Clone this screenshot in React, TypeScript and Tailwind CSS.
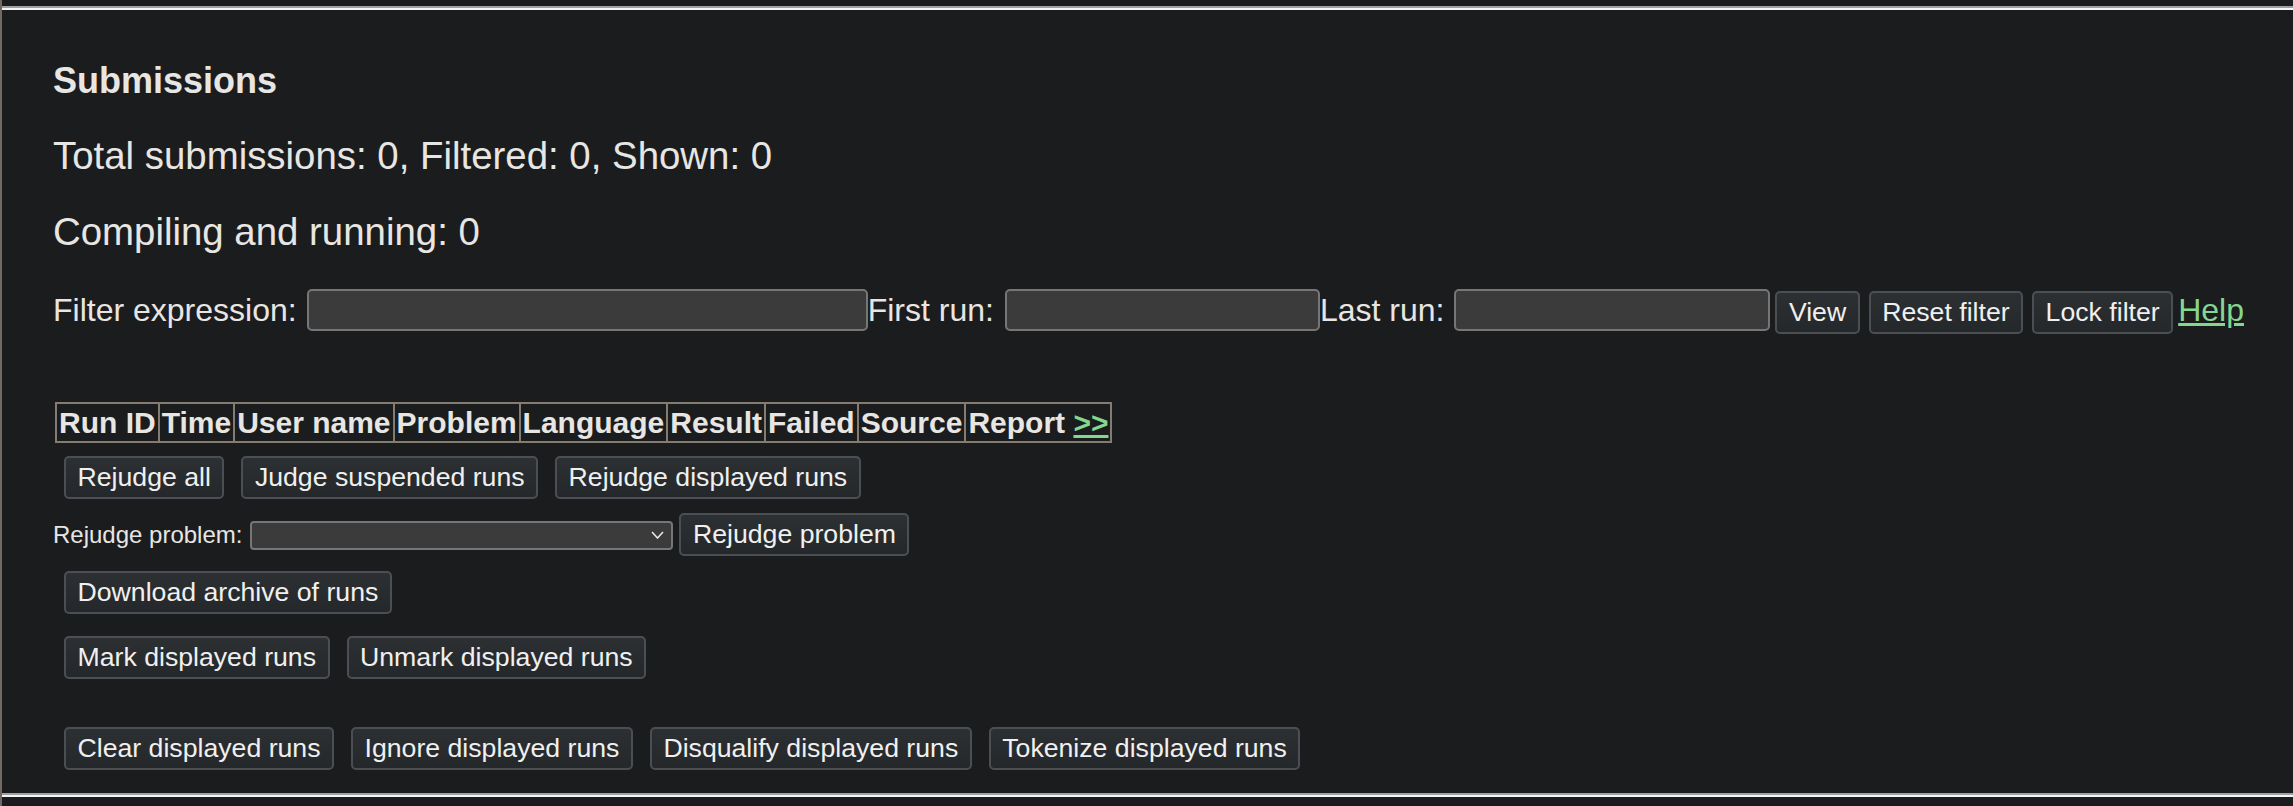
import React from "react";

const font = "font-['Liberation_Sans',Arial,sans-serif]";
const btn =
  "h-[43px] shrink-0 px-[11.5px] border-2 border-[#4b4f54] rounded-[5px] bg-linear-to-b from-[#2d3033] to-[#25282a] text-[#f0f0f0] text-[26.67px] leading-none whitespace-nowrap " +
  font;
const inputCls =
  "h-[42px] shrink-0 bg-[#3b3b3b] border-2 border-[#767676] rounded-[5px] outline-none";
const label = "mt-[3px] text-[32px] leading-[37px] whitespace-nowrap";
const th =
  "border-2 border-[#857c71] px-[2px] py-[2px] text-[30px] leading-[33px] font-bold whitespace-nowrap text-center";

function Btn({ children, className = "" }: { children: React.ReactNode; className?: string }) {
  return <button className={btn + " " + className}>{children}</button>;
}

export default function App() {
  return (
    <div
      className={
        "min-h-[806px] w-full bg-[#1b1c1e] border-l-2 border-[#6f6b64] pt-[6px] text-[#e8e6e3] overflow-hidden " +
        font
      }
    >
      <div className="h-[4px] border-t-2 border-t-[#a0a0a0] border-b-2 border-b-[#f5f5f5]" />
      <div className="pl-[51px]">
        <h2 className="mt-[50px] text-[36px] leading-[41px] font-bold">Submissions</h2>
        <p className="mt-[33px] text-[38.4px] leading-[44px]">
          Total submissions: 0, Filtered: 0, Shown: 0
        </p>
        <p className="mt-[32px] text-[38.4px] leading-[44px]">Compiling and running: 0</p>

        <div className="mt-[35px] flex items-start">
          <span className={label}>Filter expression:</span>
          <input className={inputCls + " ml-[10px] w-[561px]"} />
          <span className={label}>First run:</span>
          <input className={inputCls + " ml-[11px] w-[315px]"} />
          <span className={label}>Last run:</span>
          <input className={inputCls + " ml-[10px] w-[316px]"} />
          <Btn className="ml-[5px] mt-[2px]">View</Btn>
          <Btn className="ml-[9px] mt-[2px]">Reset filter</Btn>
          <Btn className="ml-[9px] mt-[2px]">Lock filter</Btn>
          <a href="#" className={label + " ml-[5px] text-[#85d68f] underline"}>
            Help
          </a>
        </div>

        <table className="mt-[68px] ml-[2px] border-collapse border-2 border-[#857c71]">
          <thead>
            <tr>
              <th className={th}>Run ID</th>
              <th className={th}>Time</th>
              <th className={th}>User name</th>
              <th className={th}>Problem</th>
              <th className={th}>Language</th>
              <th className={th}>Result</th>
              <th className={th}>Failed</th>
              <th className={th}>Source</th>
              <th className={th}>
                Report{" "}
                <a href="#" className="text-[#85d68f] underline">
                  &gt;&gt;
                </a>
              </th>
            </tr>
          </thead>
        </table>

        <div className="mt-[13px] ml-[11px] flex gap-[17px]">
          <Btn>Rejudge all</Btn>
          <Btn>Judge suspended runs</Btn>
          <Btn>Rejudge displayed runs</Btn>
        </div>

        <div className="mt-[14px] flex items-start">
          <span className="mt-[8px] text-[24px] leading-[28px] whitespace-nowrap">Rejudge problem:</span>
          <div className="relative ml-[8px] mt-[8px] w-[423px] h-[29px] shrink-0">
            <select className="w-full h-full appearance-none bg-[#3b3b3b] border-2 border-[#767676] rounded-[4px] outline-none" />
            <svg
              className="absolute right-[9px] top-[10px] pointer-events-none"
              width="13"
              height="8"
              viewBox="0 0 13 8"
              fill="none"
            >
              <path d="M1 1 L6.5 7 L12 1" stroke="#e8e6e3" strokeWidth="1.6" />
            </svg>
          </div>
          <Btn className="ml-[6px]">Rejudge problem</Btn>
        </div>

        <div className="mt-[15px] ml-[11px] flex">
          <Btn>Download archive of runs</Btn>
        </div>

        <div className="mt-[22px] ml-[11px] flex gap-[17px]">
          <Btn>Mark displayed runs</Btn>
          <Btn>Unmark displayed runs</Btn>
        </div>

        <div className="mt-[48px] ml-[11px] flex gap-[17px]">
          <Btn>Clear displayed runs</Btn>
          <Btn>Ignore displayed runs</Btn>
          <Btn>Disqualify displayed runs</Btn>
          <Btn>Tokenize displayed runs</Btn>
        </div>
      </div>
      <div className="mt-[23px] h-[4px] border-t-2 border-t-[#a0a0a0] border-b-2 border-b-[#f5f5f5]" />
    </div>
  );
}
